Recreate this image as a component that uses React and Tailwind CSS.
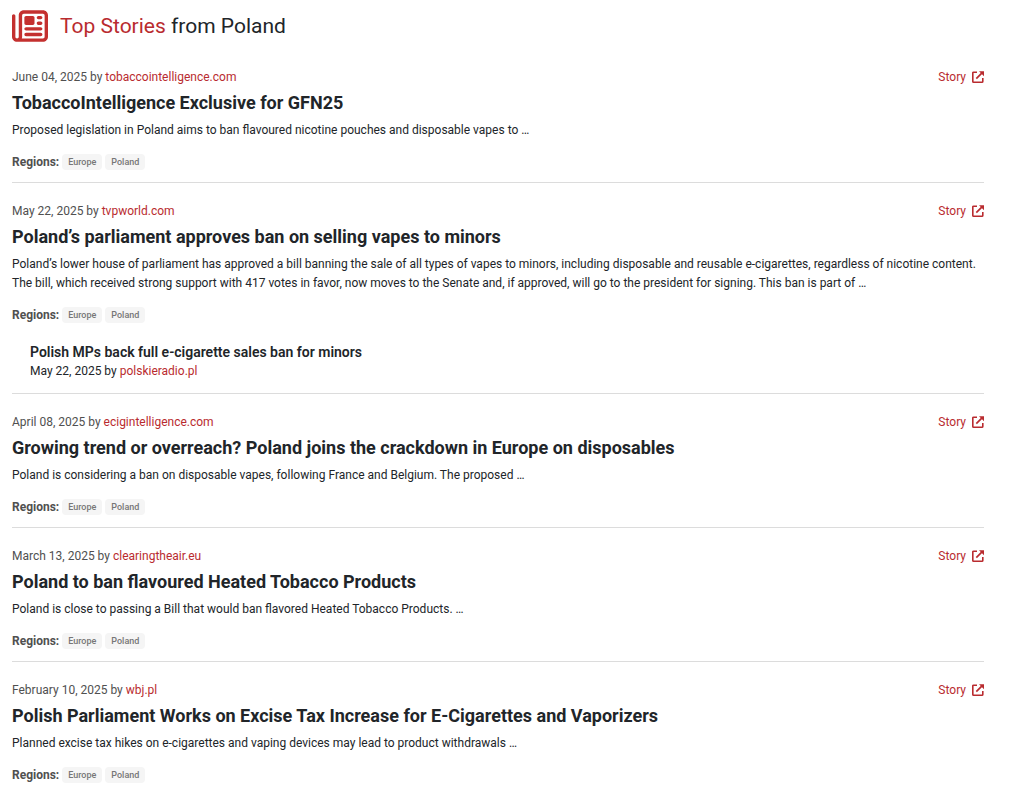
import { FaRegNewspaper } from "react-icons/fa6";

const stories = [
  {
    date: "June 04, 2025",
    source: "tobaccointelligence.com",
    title: "TobaccoIntelligence Exclusive for GFN25",
    text: "Proposed legislation in Poland aims to ban flavoured nicotine pouches and disposable vapes to …",
    regions: ["Europe", "Poland"],
  },
  {
    date: "May 22, 2025",
    source: "tvpworld.com",
    title: "Poland’s parliament approves ban on selling vapes to minors",
    text: "Poland’s lower house of parliament has approved a bill banning the sale of all types of vapes to minors, including disposable and reusable e-cigarettes, regardless of nicotine content. The bill, which received strong support with 417 votes in favor, now moves to the Senate and, if approved, will go to the president for signing. This ban is part of …",
    regions: ["Europe", "Poland"],
    related: {
      date: "May 22, 2025",
      source: "polskieradio.pl",
      title: "Polish MPs back full e-cigarette sales ban for minors",
    },
  },
  {
    date: "April 08, 2025",
    source: "ecigintelligence.com",
    title: "Growing trend or overreach? Poland joins the crackdown in Europe on disposables",
    text: "Poland is considering a ban on disposable vapes, following France and Belgium. The proposed …",
    regions: ["Europe", "Poland"],
  },
  {
    date: "March 13, 2025",
    source: "clearingtheair.eu",
    title: "Poland to ban flavoured Heated Tobacco Products",
    text: "Poland is close to passing a Bill that would ban flavored Heated Tobacco Products. …",
    regions: ["Europe", "Poland"],
  },
  {
    date: "February 10, 2025",
    source: "wbj.pl",
    title: "Polish Parliament Works on Excise Tax Increase for E-Cigarettes and Vaporizers",
    text: "Planned excise tax hikes on e-cigarettes and vaping devices may lead to product withdrawals …",
    regions: ["Europe", "Poland"],
  },
];

function ExternalIcon() {
  return (
    <svg viewBox="0 0 12 12" className="size-3" fill="none" aria-hidden="true">
      <path
        d="M5 1.2H1.6a.8.8 0 0 0-.8.8v8.4a.8.8 0 0 0 .8.8H10a.8.8 0 0 0 .8-.8V7"
        stroke="currentColor"
        strokeWidth="1.6"
      />
      <path d="M4.3 7.7 9.8 2.2" stroke="currentColor" strokeWidth="1.7" />
      <path d="M7 .2h5v5z" fill="currentColor" />
    </svg>
  );
}

function Byline({ date, source }) {
  return (
    <p>
      {date} by{" "}
      <a href="#" className="text-[#b92b2f]">
        {source}
      </a>
    </p>
  );
}

function Related({ story }) {
  return (
    <div className="mt-[17px] mb-0.5 pl-[18px] leading-[19px]">
      <h3 className="text-sm leading-5 font-semibold">{story.title}</h3>
      <Byline date={story.date} source={story.source} />
    </div>
  );
}

function Story({ story }) {
  return (
    <article className="border-b border-[#dcdcdc] pt-[18px] pb-[10px] last:border-b-0">
      <div className="flex justify-between leading-5 text-[#505050]">
        <Byline date={story.date} source={story.source} />
        <a href="#" className="flex items-center gap-1.5 text-[#b92b2f]">
          Story
          <ExternalIcon />
        </a>
      </div>
      <h2 className="mt-1 text-lg leading-6 font-bold">{story.title}</h2>
      <p className="mt-1.5 leading-[19px]">{story.text}</p>
      <div className="mt-3 flex h-5 items-center gap-[3px]">
        <span className="font-bold text-[#505050]">Regions:</span>
        {story.regions.map((region) => (
          <span
            key={region}
            className="rounded-sm bg-[#f5f5f5] px-1.5 text-[9px] leading-4 font-medium text-[#777777]"
          >
            {region}
          </span>
        ))}
      </div>
      {story.related && <Related story={story.related} />}
    </article>
  );
}

export default function App() {
  return (
    <main className="bg-white pt-2 pr-[27px] pl-3 font-['Roboto',sans-serif] text-xs text-[#212529]">
      <header className="mb-[5px] flex h-9 items-center gap-3">
        <FaRegNewspaper className="size-9 text-[#c4302f]" />
        <h1 className="text-[21px] leading-7">
          <span className="text-[#b92b2f]">Top Stories</span> from Poland
        </h1>
      </header>
      {stories.map((story) => (
        <Story key={story.title} story={story} />
      ))}
    </main>
  );
}
